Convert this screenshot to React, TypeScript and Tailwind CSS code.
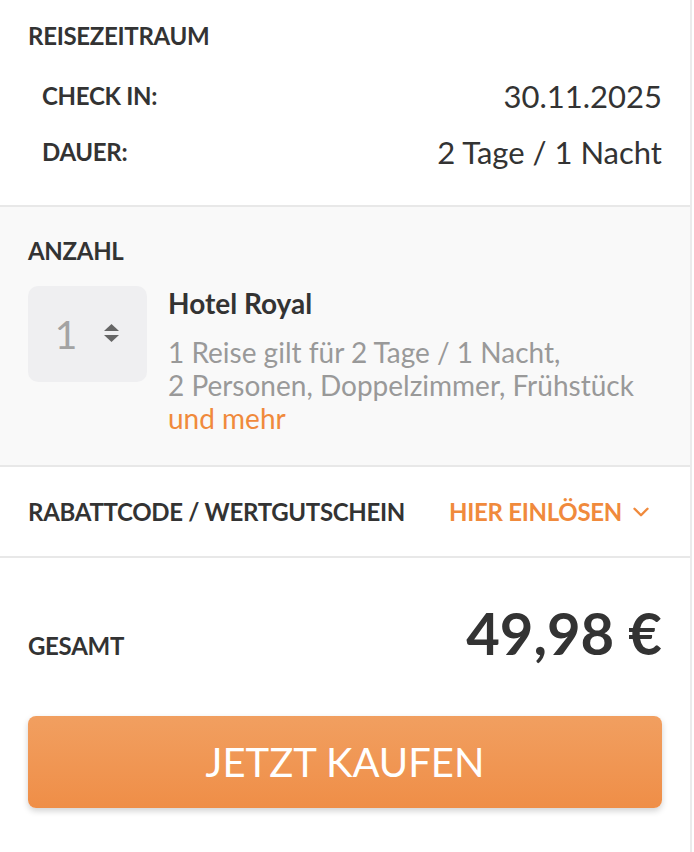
import { ChevronDown } from 'lucide-react';

const font = { fontFamily: 'Lato, "Noto Sans", sans-serif' };

function Stepper() {
  return (
    <div className="flex h-[96px] w-[119px] shrink-0 items-center justify-center gap-[26px] rounded-[10px] bg-[#efeff1]">
      <span className="text-[39px] font-normal leading-none text-[#a3a3a3]">1</span>
      <svg width="17" height="22" viewBox="0 0 17 22" className="mt-[-2px]">
        <path d="M8.5 2 L16 9 H1 Z" fill="#666" />
        <path d="M8.5 20 L16 13 H1 Z" fill="#666" />
      </svg>
    </div>
  );
}

export default function App() {
  return (
    <div className="min-h-screen w-[692px] border-r-2 border-[#ebebeb] bg-white text-[#333]" style={font}>
      <section className="h-[207px] border-b-2 border-[#e8e8e8] px-[28px] pt-[21px]">
        <h2 className="text-[24px] font-bold leading-[30px] tracking-[-0.3px]">REISEZEITRAUM</h2>
        <div className="mt-[25px] flex items-center justify-between pl-[14px]">
          <span className="text-[24px] font-bold tracking-[-0.3px]">CHECK IN:</span>
          <span className="text-[31px] leading-[40px]">30.11.2025</span>
        </div>
        <div className="mt-[16px] flex items-center justify-between pl-[14px]">
          <span className="text-[24px] font-bold tracking-[-0.3px]">DAUER:</span>
          <span className="text-[31px] leading-[40px]">2 Tage / 1 Nacht</span>
        </div>
      </section>

      <section className="h-[260px] border-b-2 border-[#e8e8e8] bg-[#f9f9f9] px-[28px] pt-[29px]">
        <h2 className="text-[24px] font-bold leading-[30px] tracking-[-0.3px]">ANZAHL</h2>
        <div className="mt-[20px] flex gap-[21px]">
          <Stepper />
          <div>
            <h3 className="text-[28px] font-bold leading-[34px]">Hotel Royal</h3>
            <p className="mt-[16px] text-[28px] leading-[33px] text-[#999]">
              1 Reise gilt für 2 Tage / 1 Nacht,
              <br />
              2 Personen, Doppelzimmer, Frühstück
              <br />
              <span className="text-[#f08a3c]">und mehr</span>
            </p>
          </div>
        </div>
      </section>

      <section className="flex h-[91px] items-center justify-between border-b-2 border-[#e8e8e8] pl-[28px] pr-[36px]">
        <span className="text-[24px] font-bold tracking-[-0.3px]">RABATTCODE / WERTGUTSCHEIN</span>
        <button className="flex items-center gap-[6px] text-[24px] font-bold tracking-[-0.3px] text-[#f08a3c]">
          HIER EINLÖSEN
          <ChevronDown size={26} strokeWidth={2.2} />
        </button>
      </section>

      <section className="px-[28px] pt-[46px]">
        <div className="flex items-baseline justify-between">
          <span className="text-[24px] font-bold tracking-[-0.3px]">GESAMT</span>
          <span className="text-[58px] font-bold leading-none">49,98 €</span>
        </div>
        <button className="mt-[52px] flex h-[92px] w-full items-center justify-center rounded-[8px] bg-gradient-to-b from-[#f19f60] to-[#ef8e47] text-[40px] text-white shadow-[0_3px_6px_rgba(0,0,0,0.18)]">
          JETZT KAUFEN
        </button>
      </section>
    </div>
  );
}
